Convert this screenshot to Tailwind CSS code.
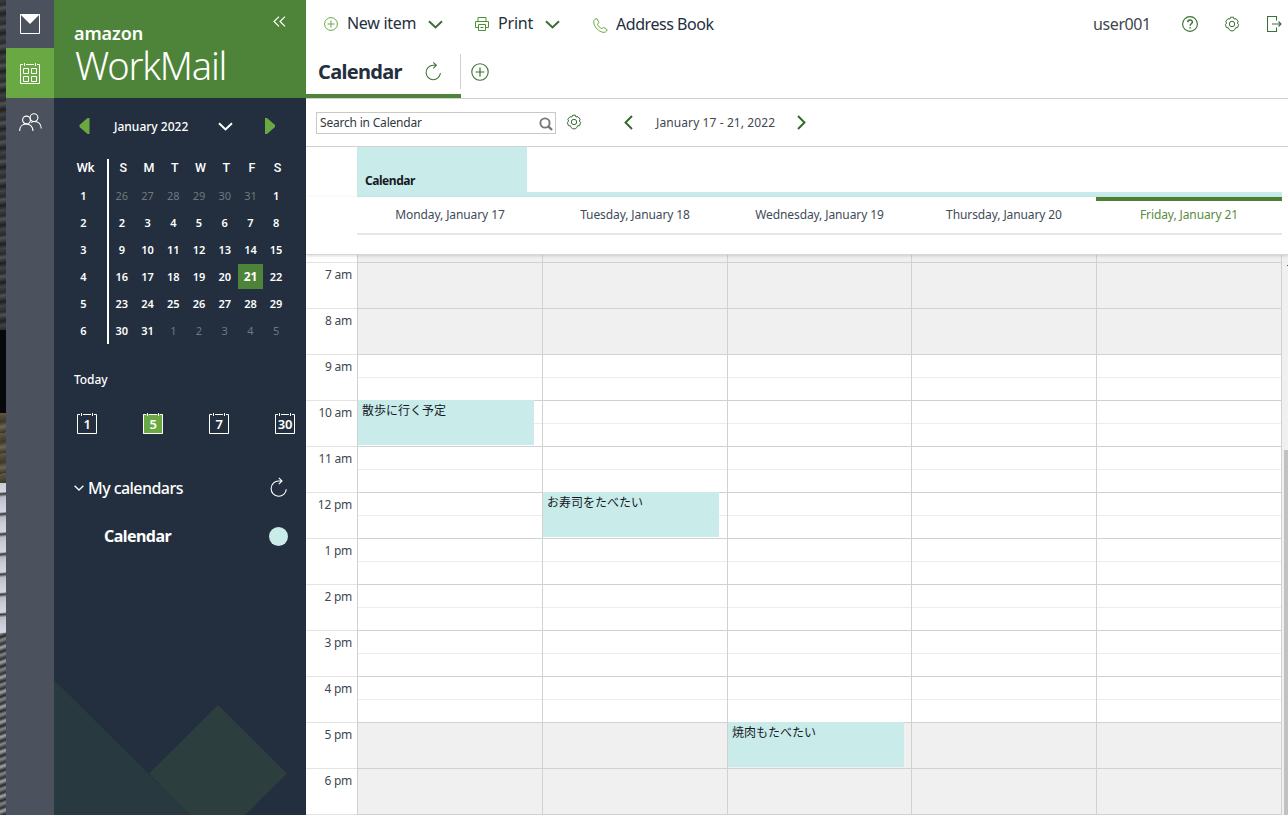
<!DOCTYPE html>
<html lang="en">
<head>
<meta charset="utf-8">
<title>Amazon WorkMail</title>
<script src="https://cdn.jsdelivr.net/npm/@tailwindcss/browser@4"></script>
</head>
<body class="bg-white overflow-hidden font-['Noto_Sans','Noto_Sans_CJK_JP',sans-serif]">
<svg class="hidden">
  <symbol id="refresh" viewBox="0 0 18 20"><path d="M16.3 12.2A7.6 7.6 0 1 1 8.7 4H11.5M8.8 .8L12 4L8.800 7.200" fill="none" stroke="currentColor" stroke-width="1.1"/></symbol>
  <symbol id="gear" viewBox="0 0 16 16"><path d="M6.6 1.200H9.400L10.100 3L12 2.700L14.200 5.200L13.400 7L14.600 8.600L13.600 11.600L11.600 11.800L10.800 13.600L9.200 14.800H6.800L5.200 13.600L4.400 11.800L2.400 11.600L1.400 8.600L2.600 7L1.800 5.200L4 2.700L5.900 3Z" fill="none" stroke="currentColor" stroke-width="1" stroke-linejoin="round"/><circle cx="8" cy="8" r="2.700" fill="none" stroke="currentColor" stroke-width="1"/></symbol>
  <symbol id="chev" viewBox="0 0 15 9"><path d="M1 1.200L7.500 7.400L14 1.200" fill="none" stroke="currentColor" stroke-width="2"/></symbol>
  <symbol id="plus" viewBox="0 0 18 18"><path d="M9 4.500V13.500M4.500 9H13.500" stroke="currentColor" stroke-width="1.200"/><circle cx="9" cy="9" r="8.200" fill="none" stroke="currentColor" stroke-width="1.100"/></symbol>
  <symbol id="cal" viewBox="0 0 20 23"><path d="M3 2.500H.5V21.500H19.500V2.500H17M6 2.500H14M4.500 1V4M15.500 1V4" fill="none" stroke="currentColor"/></symbol>
</svg>
<div class="flex w-[1288px] h-[815px]">

  <!-- desktop edge -->
  <div class="w-[6px] shrink-0 h-full flex flex-col">
    <div class="h-[330px] bg-[repeating-linear-gradient(172deg,#3d3e40_0px,#2a2b2c_5px,#515253_8px,#1f2021_14px,#464646_19px)]"></div>
    <div class="h-[83px] bg-[#060809]"></div>
    <div class="h-[70px] bg-[repeating-linear-gradient(170deg,#5f5744_0px,#3e3a28_9px,#6b6558_14px,#37352b_20px)]"></div>
    <div class="h-[150px] bg-[repeating-linear-gradient(175deg,#c9cbd6_0px,#d5d6e0_9px,#34353b_11px,#b9bbc6_14px,#c9cbd6_20px)]"></div>
    <div class="flex-1 bg-[repeating-linear-gradient(160deg,#a3a4a8_0px,#26282a_4px,#85868a_7px,#2e3032_11px,#a3a4a8_14px)]"></div>
  </div>

  <!-- app rail -->
  <nav class="w-[48px] shrink-0 bg-[#4b515d] text-white flex flex-col">
    <div class="h-[48px] flex justify-center pt-[14px]"><svg class="w-[20px] h-[20px]" viewBox="0 0 20 20"><path d="M.5 .5H19.500V19.500H.5Z" fill="none" stroke="currentColor"/><path d="M0 0H20L10 10Z" fill="currentColor"/></svg></div>
    <div class="h-[50px] bg-[#69a843] flex justify-center pt-[14px]"><svg class="w-[20px] h-[23px]" viewBox="0 0 20 23" fill="none" stroke="currentColor"><use href="#cal"/><path d="M3.500 6.500H8.500V11.500H3.500ZM11.500 6.500H16.500V11.500H11.500ZM3.500 14.500H8.500V19.500H3.500ZM11.500 14.500H16.500V19.500H11.500Z"/></svg></div>
    <div class="h-[48px] flex justify-center pt-[15px]"><svg class="w-[23px] h-[19px]" viewBox="0 0 23 19" fill="none" stroke="currentColor" stroke-width="1.100"><circle cx="7.500" cy="7" r="3.900"/><circle cx="15" cy="4.600" r="3.900"/><path d="M.6 18C.6 13.500 3.500 11 7.300 11S14 13.500 14 18M12 9.700C13 8.800 14 8.500 15.400 8.500C19.500 8.500 22 11 22.300 15.500"/></svg></div>
  </nav>

  <!-- sidebar -->
  <aside class="relative w-[252px] shrink-0 bg-[#232f3e] text-white overflow-hidden">
    <svg class="absolute left-0 bottom-0 w-[252px] h-[140px]" viewBox="0 0 252 140"><path d="M0 5L136 140H0Z" fill="#28393f"/><path d="M164 30L233 98.500L191 140H136L95 98.500Z" fill="#2d3e3e"/></svg>
    <div class="relative flex flex-col">
      <header class="h-[98px] bg-[#4e8439] flex pl-[20px]">
        <div class="w-[199px] pt-[21px]">
          <div class="text-[18px] leading-[24px] font-semibold -tracking-[.1px]">amazon</div>
          <div class="text-[38px] leading-[40px] font-light -tracking-[1.200px] pl-[1px]">WorkMail</div>
        </div>
        <svg class="w-[13px] h-[11px] mt-[16px]" viewBox="0 0 13 11"><path d="M6 .6L1 5.500L6 10.400M12 .6L7 5.500L12 10.400" fill="none" stroke="currentColor" stroke-width="1.200"/></svg>
      </header>
      <div class="h-[57px] flex items-center pl-[25px]">
        <svg class="w-[11px] h-[16px] -mt-px text-[#69a843]" viewBox="0 0 11 16"><path d="M8.500 0H10.500V16H8.500L.5 9V7Z" fill="currentColor"/></svg>
        <span class="ml-[24px] w-[74px] whitespace-nowrap text-[12px] font-medium">January 2022</span>
        <svg class="w-[15px] h-[9px] ml-[30px]"><use href="#chev"/></svg>
        <svg class="w-[11px] h-[16px] ml-[32px] -mt-px text-[#69a843]" viewBox="0 0 11 16"><path d="M2 0H0V16H2L10 9V7Z" fill="currentColor"/></svg>
      </div>
      <div class="flex h-[190px] pt-[1px] text-[11px] font-semibold">
        <div id="weeks" class="w-[55px] mt-[3px] h-[185px] border-r-2 border-white flex flex-col pl-[4px]"></div>
        <div id="days" class="w-[180px] h-[185px] mt-[3px] grid grid-cols-7 grid-rows-[23px_repeat(6,27px)]"></div>
      </div>
      <div class="pl-[20px] mt-[26px] h-[18px] leading-[18px] text-[12px] font-medium -tracking-[.1px]">Today</div>
      <div class="pl-[23px] pr-[11px] mt-[23px] flex justify-between text-[13px] font-semibold" id="views"></div>
      <div class="mt-[41px] h-[24px] flex items-center pl-[20px]">
        <svg class="w-[10px] h-[6px]" viewBox="0 0 10 6"><path d="M.6 .8L5 5L9.400 .8" fill="none" stroke="currentColor" stroke-width="1.300"/></svg>
        <span class="ml-[4px] w-[182px] text-[16px] font-medium -tracking-[.55px]">My calendars</span>
        <svg class="w-[18px] h-[20px] -mt-[2px]"><use href="#refresh"/></svg>
      </div>
      <div class="mt-[24px] h-[24px] flex items-center pl-[50px]">
        <span class="w-[165px] text-[16px] font-bold -tracking-[.55px]">Calendar</span>
        <span class="w-[19px] h-[19px] rounded-full bg-[#c9ebea]"></span>
      </div>
    </div>
  </aside>

  <!-- main -->
  <main class="flex-1 min-w-0 flex flex-col text-[#232f3e]">
    <div class="h-[48px] shrink-0 flex items-center text-[16px] whitespace-nowrap pl-[18px]">
      <svg class="w-[14px] h-[14px] text-[#69a843]" viewBox="0 0 14 14" fill="none" stroke="currentColor"><circle cx="7" cy="7" r="6.400"/><path d="M7 3.500V10.500M3.500 7H10.500"/></svg>
      <span class="ml-[9px] w-[81px] -mt-[2px] -tracking-[.3px]">New item</span>
      <svg class="w-[15px] h-[9px] text-[#3b6e36]"><use href="#chev"/></svg>
      <svg class="w-[14px] h-[14px] ml-[32px] text-[#4e9132]" viewBox="0 0 14 14" fill="none" stroke="currentColor"><path d="M3 4.500V.5H11V4.500M3 10.500H.5V4.500H13.500V10.500H11M3.500 7.500H10.500V13.500H3.500ZM5.500 10.500H8.500"/></svg>
      <span class="ml-[9px] w-[47px] -mt-[2px] -tracking-[.2px]">Print</span>
      <svg class="w-[15px] h-[9px] text-[#3b6e36]"><use href="#chev"/></svg>
      <svg class="w-[15px] h-[15px] ml-[33px] mt-[2px] text-[#69a843]" viewBox="0 0 15 15"><path d="M3 .7C1.200 1.500 .4 3 .8 5C2 10 5.500 13.300 10 14.300C12.200 14.600 13.600 13.600 14.200 11.800L10.600 9.300L8.800 10.700C6.800 9.700 5.300 8.200 4.400 6.200L5.900 4.500L4 .7Z" fill="none" stroke="currentColor" stroke-linejoin="round"/></svg>
      <span class="ml-[8px] w-[477px] -tracking-[.45px]">Address Book</span>
      <span class="w-[89px] -mt-px -tracking-[.4px] text-[#414750]">user001</span>
      <svg class="w-[16px] h-[16px] text-[#3b6e36]" viewBox="0 0 16 16"><circle cx="8" cy="8" r="7.400" fill="none" stroke="currentColor" stroke-width="1.100"/><path d="M5.700 6.300C5.700 3.300 10.400 3.300 10.400 6C10.400 7.700 8.100 7.800 8.100 9.800M8.100 11V12.500" fill="none" stroke="currentColor" stroke-width="1.400"/></svg>
      <svg class="w-[16px] h-[16px] ml-[26px] text-[#3b6e36]"><use href="#gear"/></svg>
      <svg class="w-[15px] h-[16px] ml-[27px] -mt-px text-[#3b6e36] shrink-0" viewBox="0 0 15 16"><path d="M9.500 4.500V.5H.5V15.500H9.500V11.500M5 8H14M11.500 5.500L14 8L11.500 10.500" fill="none" stroke="currentColor" stroke-width="1.100"/></svg>
    </div>
    <div class="h-[51px] shrink-0 border-b border-[#d1d1d1] flex">
      <div class="w-[155px] h-[50px] border-b-4 border-[#4e8439] flex items-center pl-[12px]">
        <span class="w-[107px] text-[20px] font-bold -tracking-[.680px] mt-[2px]">Calendar</span>
        <svg class="w-[17px] h-[20px] -mt-px text-[#3b6e36]"><use href="#refresh"/></svg>
        <span class="w-px h-[35px] bg-[#d1d1d1] ml-[18px] mt-[1px]"></span>
      </div>
      <svg class="w-[18px] h-[18px] ml-[10px] mt-[15px] text-[#3b6e36]"><use href="#plus"/></svg>
    </div>
    <div class="h-[47px] shrink-0 flex items-center pl-[10px] text-[12px] whitespace-nowrap">
      <div class="w-[240px] h-[22px] mt-[1px] border border-[#c8c8c8] flex items-center pl-[3px] pr-[2px] justify-between text-[#33383d] -tracking-[.2px]">
        <span>Search in Calendar</span>
        <svg class="w-[14px] h-[14px] mt-[2px]" viewBox="0 0 14 14"><circle cx="6" cy="6" r="4.600" fill="none" stroke="#777" stroke-width="1.900"/><path d="M9.300 9.300L13 13" stroke="#777" stroke-width="2.400"/></svg>
      </div>
      <svg class="w-[16px] h-[16px] ml-[10px] -mt-px text-[#3b6e36]"><use href="#gear"/></svg>
      <svg class="w-[9px] h-[15px] ml-[42px] -mt-px text-[#2f6b25]" viewBox="0 0 9 15"><path d="M8 1L1.500 7.500L8 14" fill="none" stroke="currentColor" stroke-width="1.900"/></svg>
      <span class="ml-[23px] w-[141px] text-[#414750] tracking-[.1px]">January 17 - 21, 2022</span>
      <svg class="w-[9px] h-[15px] -mt-px text-[#2f6b25]" viewBox="0 0 9 15"><path d="M1 1L7.500 7.500L1 14" fill="none" stroke="currentColor" stroke-width="1.900"/></svg>
    </div>
    <div class="h-[51px] shrink-0 border-t border-[#d1d1d1] pl-[51px] pr-[6px] flex items-end">
      <div class="w-[170px] h-full bg-[#c9ebea] text-[#16191f] text-[12px] font-bold -tracking-[.450px] pl-[8px] pt-[25px]">Calendar</div>
      <div class="flex-1 h-[5px] bg-[#c9ebea]"></div>
    </div>
    <div class="relative z-10 h-[58px] shrink-0 bg-white pl-[51px] pr-[6px] border-b border-[#d6d6d6] shadow-[0_1px_3px_rgba(0,0,0,.15)]">
      <div id="heads" class="grid grid-cols-[185px_185px_184px_185px_186px] h-[38px] border-b-2 border-[#e6e6e6] text-[12px] -tracking-[.100px] text-center leading-[36px] text-[#414b57]"></div>
    </div>
    <div class="flex flex-1 min-h-0 -mt-px">
      <div id="grid" class="w-[976px] flex flex-col"></div>
      <div class="w-[6px] bg-[#f0f0f0] flex flex-col items-end"><div class="mt-[11px] w-px h-px bg-[#505050]"></div><div class="mt-[184px] w-[4px] flex-1 bg-[#c1c1c1]"></div></div>
    </div>
  </main>
</div>
<script>
  const el = id => document.getElementById(id);
  const weekCell = 'h-[27px] w-[51px] leading-[27px] text-center';

  el('weeks').innerHTML = '<div class="h-[23px] w-[55px] leading-[18px] text-center font-[Roboto] font-medium text-[13px]">Wk</div>' +
    [1,2,3,4,5,6].map(n => `<div class="${weekCell}">${n}</div>`).join('');

  let days = ['S','M','T','W','T','F','S'].map(d => `<div class="text-center leading-[18px] pl-[3px] font-[Roboto] font-medium text-[12.500px]">${d}</div>`).join('');
  for (let i = -5; i <= 36; i++) {
    const n = i < 1 ? 31 + i : i > 31 ? i - 31 : i;
    const cls = i < 1 || i > 31 ? 'text-[#72777e] font-normal' : '';
    days += i === 21
      ? `<div class="flex items-center justify-center"><span class="w-[25px] h-[25px] leading-[25px] text-center bg-[#4e8439] font-bold text-[12px] -tracking-[.3px]">21</span></div>`
      : `<div class="text-center leading-[27px] ${cls}">${n}</div>`;
  }
  el('days').innerHTML = days;

  el('views').innerHTML = [1,5,7,30].map(n =>
    `<div class="relative w-[20px] h-[23px]"><svg class="w-[20px] h-[23px]">${n === 5 ? '<rect y="2" width="20" height="20" fill="#69a843"/>' : ''}<use href="#cal"/></svg><span class="absolute inset-0 text-center leading-[24px] -tracking-[.2px]">${n}</span></div>`).join('');

  el('heads').innerHTML = ['Monday, January 17','Tuesday, January 18','Wednesday, January 19','Thursday, January 20'].map(d => `<div class="pl-px">${d}</div>`).join('') +
    '<div class="border-t-4 border-[#4e7f30] text-[#5b8a3e] leading-[28px]">Friday, January 21</div>';

  const events = { '10 am': [0, '散歩に行く予定'], '12 pm': [1, 'お寿司をたべたい'], '5 pm': [2, '焼肉もたべたい'] };
  const closed = ['', '7 am', '8 am', '5 pm', '6 pm', ' '];
  el('grid').innerHTML = ['', '7 am','8 am','9 am','10 am','11 am','12 pm','1 pm','2 pm','3 pm','4 pm','5 pm','6 pm',' '].map(h => {
    const off = closed.includes(h);
    let cells = '';
    for (let c = 0; c < 5; c++) {
      const ev = events[h] && events[h][0] === c ? events[h][1] : '';
      cells += `<div class="relative border-l border-[#d1d1d1] flex flex-col">` +
        `<div class="h-[23px] ${off ? '' : 'border-b border-[#ededed]'}"></div>` +
        (ev ? `<div class="absolute left-0 -top-px w-[176px] h-[45px] bg-[#c9ebea] text-[#16191f] text-[12px] leading-[18px] pl-[4px] pt-[2px]">${ev}</div>` : '') + '</div>';
    }
    return `<div class="${h === '' ? 'h-[8px]' : h === ' ' ? 'h-px' : 'h-[46px]'} shrink-0 flex overflow-hidden">` +
      `<div class="w-[51px] ${h === '' ? '' : 'border-t'} border-[#e3e3e3] text-right pr-[5px] pt-[3px] text-[12px] leading-[18px] -tracking-[.250px] text-[#414750] whitespace-nowrap">${h}</div>` +
      `<div class="grid grid-cols-[185px_185px_184px_185px_185px] w-[925px] ${h === '' ? '' : 'border-t'} border-r border-[#d1d1d1] ${off ? 'bg-[#f0f0f0]' : ''}">${cells}</div></div>`;
  }).join('');
</script>
</body>
</html>
